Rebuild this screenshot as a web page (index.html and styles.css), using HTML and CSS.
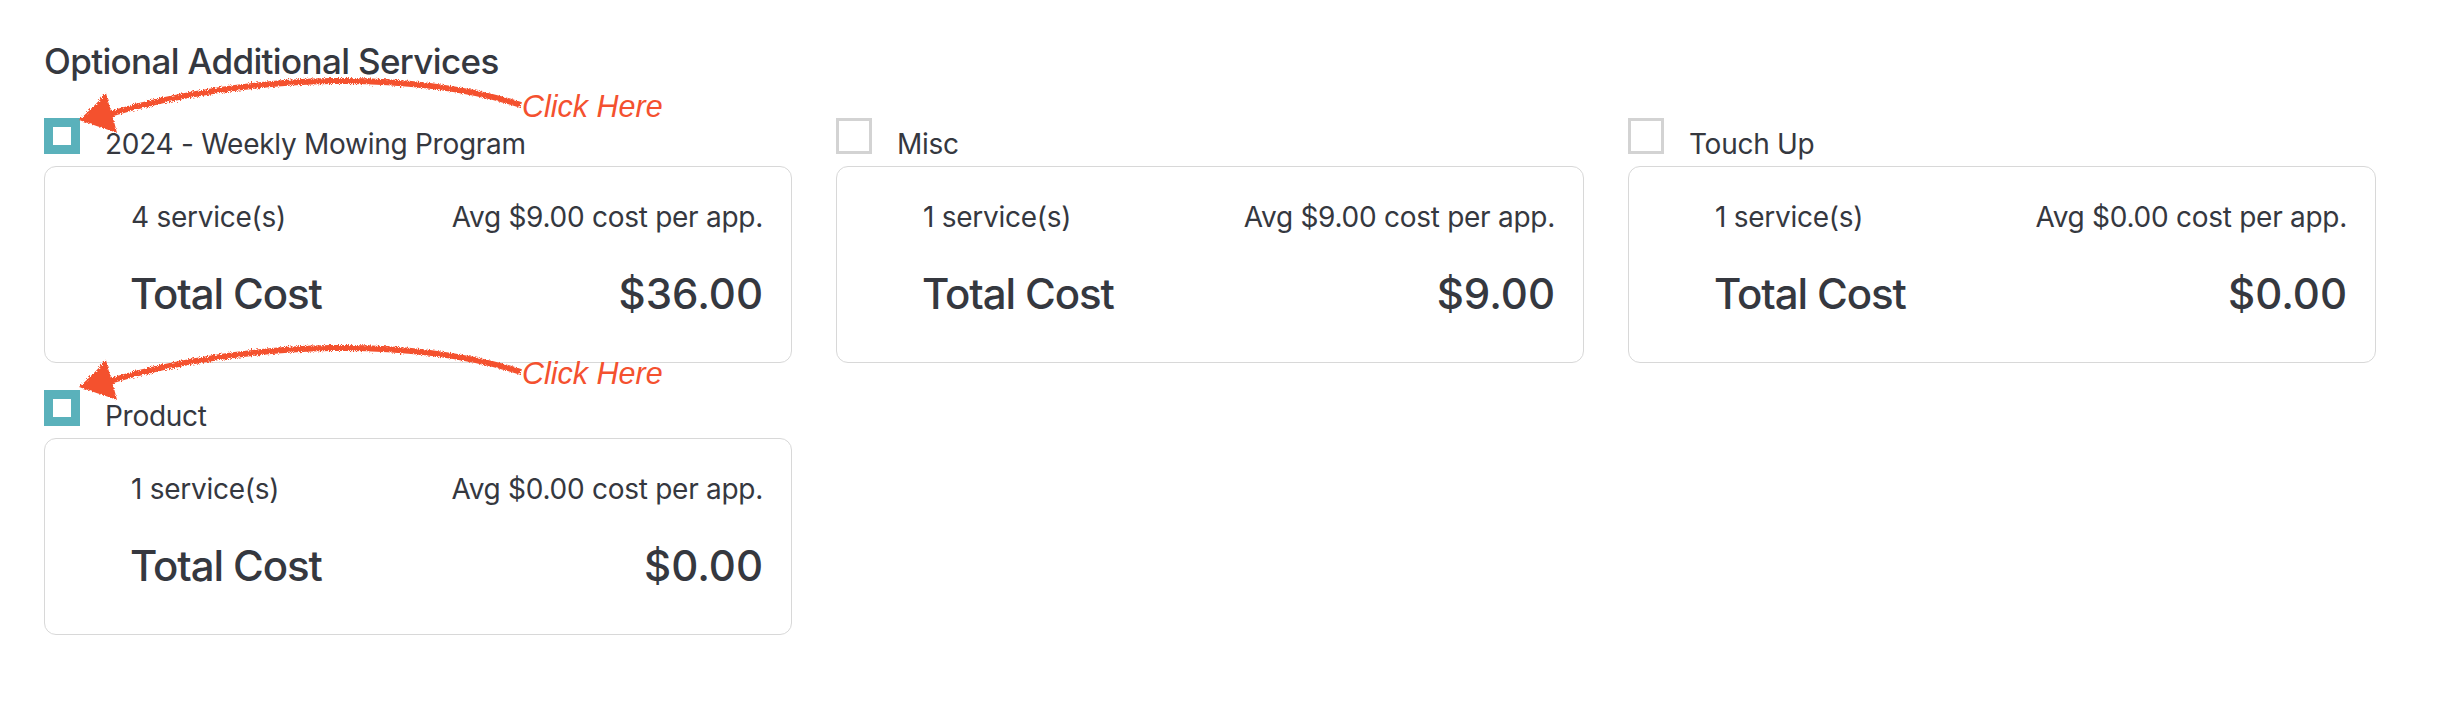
FILE: index.html
```html
<!DOCTYPE html>
<html lang="en">

<head>
    <meta charset="UTF-8">
    <meta name="viewport" content="width=device-width, initial-scale=1.0">
    <title>Optional Additional Services</title>
    <link rel="stylesheet" href="styles.css">
</head>

<body>
    <svg class="defs" width="0" height="0" aria-hidden="true">
        <filter id="rough" x="-5%" y="-20%" width="110%" height="140%">
            <feTurbulence type="fractalNoise" baseFrequency="1.1" numOctaves="2" seed="4"></feTurbulence>
            <feDisplacementMap in="SourceGraphic" scale="5"></feDisplacementMap>
        </filter>
        <symbol id="arrow" viewBox="0 0 460 60">
            <path class="arrow-line" d="M445 29 C390 11 320 4 256 5 C180 6 100 18 34 38"></path>
            <path class="arrow-head" d="M3 44 C12 36 22 26 30 17 C33 30 38 44 41 57 C28 52 14 48 3 44 Z"></path>
        </symbol>
    </svg>

    <div class="page">
        <h2 class="title">Optional Additional Services</h2>
        <div class="services">
            <div class="service">
                <div class="service-head">
                    <span class="check check-on"></span>
                    <span class="service-name">2024 - Weekly Mowing Program</span>
                </div>
                <div class="card">
                    <div class="row">
                        <span>4 service(s)</span>
                        <span>Avg $9.00 cost per app.</span>
                    </div>
                    <div class="row row-total">
                        <span class="total-label">Total Cost</span>
                        <span>$36.00</span>
                    </div>
                </div>
                <div class="note">
                    <svg class="note-arrow"><use href="#arrow"></use></svg>
                    <span class="note-text">Click Here</span>
                </div>
            </div>

            <div class="service">
                <div class="service-head">
                    <span class="check"></span>
                    <span class="service-name">Misc</span>
                </div>
                <div class="card">
                    <div class="row">
                        <span>1 service(s)</span>
                        <span>Avg $9.00 cost per app.</span>
                    </div>
                    <div class="row row-total">
                        <span class="total-label">Total Cost</span>
                        <span>$9.00</span>
                    </div>
                </div>
            </div>

            <div class="service">
                <div class="service-head">
                    <span class="check"></span>
                    <span class="service-name">Touch Up</span>
                </div>
                <div class="card">
                    <div class="row">
                        <span>1 service(s)</span>
                        <span>Avg $0.00 cost per app.</span>
                    </div>
                    <div class="row row-total">
                        <span class="total-label">Total Cost</span>
                        <span>$0.00</span>
                    </div>
                </div>
            </div>

            <div class="service">
                <div class="service-head">
                    <span class="check check-on"></span>
                    <span class="service-name">Product</span>
                </div>
                <div class="card">
                    <div class="row">
                        <span>1 service(s)</span>
                        <span>Avg $0.00 cost per app.</span>
                    </div>
                    <div class="row row-total">
                        <span class="total-label">Total Cost</span>
                        <span>$0.00</span>
                    </div>
                </div>
                <div class="note note-lower">
                    <svg class="note-arrow"><use href="#arrow"></use></svg>
                    <span class="note-text">Click Here</span>
                </div>
            </div>
        </div>
    </div>
</body>

</html>
```

FILE: styles.css
```css
* {
    margin: 0;
    padding: 0;
    box-sizing: border-box;
}

body {
    font-family: "Inter", "Liberation Sans", sans-serif;
    font-size: 28px;
    letter-spacing: -0.27px;
    color: #35383f;
    background: #fff;
}

.defs {
    position: absolute;
}

.page {
    padding: 40px 62px 0 44px;
}

.title {
    font-size: 35px;
    line-height: 42px;
    font-weight: 500;
    letter-spacing: -0.65px;
    margin-bottom: 36px;
}

.services {
    display: grid;
    grid-template-columns: repeat(3, 748px);
    column-gap: 44px;
    row-gap: 27px;
}

.service {
    position: relative;
}

.service-head {
    display: flex;
    align-items: flex-end;
    height: 48px;
}

.check {
    width: 36px;
    height: 36px;
    border: 3px solid #d3d3d3;
    margin-bottom: 12px;
}

.check-on {
    border: 9px solid #5ab1bb;
}

.service-name {
    margin-left: 25px;
    margin-bottom: 4px;
    line-height: 36px;
}

.card {
    height: 197px;
    padding: 32px 28px 0 86px;
    border: 1px solid #d8d8d8;
    border-radius: 12px;
}

.row {
    display: flex;
    justify-content: space-between;
    align-items: center;
    line-height: 36px;
}

.row-total {
    margin-top: 35px;
    font-size: 42px;
    line-height: 48px;
    font-weight: 500;
    letter-spacing: 0;
}

.total-label {
    margin-left: -1px;
    letter-spacing: -1.1px;
}

/* red "click here" markup drawn over the screenshot */
.note {
    position: absolute;
    left: 32px;
    top: -42px;
    display: flex;
    align-items: flex-start;
    pointer-events: none;
}

.note-lower {
    top: -47px;
}

.note-arrow {
    width: 460px;
    height: 60px;
    overflow: visible;
    filter: url(#rough);
}

.arrow-line {
    fill: none;
    stroke: #f4512f;
    stroke-width: 6;
}

.arrow-head {
    fill: #f4512f;
}

.note-text {
    margin-left: -14px;
    margin-top: 12px;
    font-family: "Liberation Sans", sans-serif;
    font-style: italic;
    font-size: 30.5px;
    line-height: 36px;
    letter-spacing: 0;
    color: #f4512f;
}
```
